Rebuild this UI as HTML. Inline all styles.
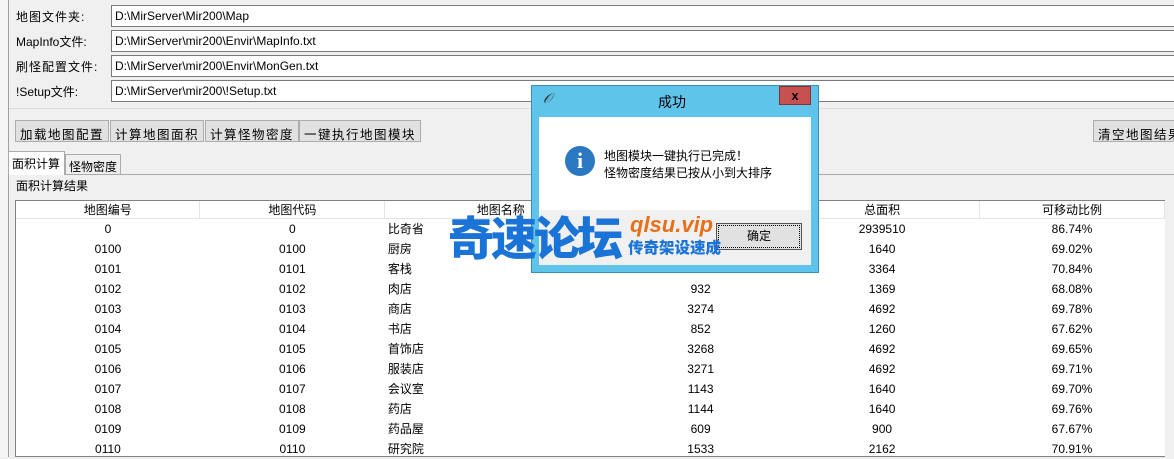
<!DOCTYPE html>
<html><head><meta charset="utf-8"><style>
*{margin:0;padding:0;box-sizing:border-box}
body{width:1174px;height:457px;overflow:hidden;background:#f0f0f0;font-family:"Liberation Sans","Noto Sans CJK SC",sans-serif;font-size:12px;color:#000;position:relative}
.a{position:absolute}
.lbl{left:16px;font-size:12px;letter-spacing:1px}
.inp{left:111px;width:1070px;height:22px;border:1px solid #7a7a7a;background:#fff;padding:3px 3px;font-size:12px}
.btn{top:120px;height:22px;border:1px solid #adadad;background:#e1e1e1;font-size:12.5px;letter-spacing:1.5px;padding:3px 4px;white-space:nowrap}
table{border-collapse:collapse;font-size:12px}
td{height:20px;text-align:center;padding:0}
th{height:16px;font-weight:normal;border-right:1px solid #e5e5e5;border-bottom:1px solid #e5e5e5}
</style></head><body>
<div class="a" style="left:0;top:0;width:9px;height:457px;background:#f5f5f5;border-right:1px solid #a0a0a0"></div>
<div class="a lbl" style="top:8px">地图文件夹:</div>
<div class="a lbl" style="top:33px;letter-spacing:0">MapInfo文件:</div>
<div class="a lbl" style="top:58px">刷怪配置文件:</div>
<div class="a lbl" style="top:83px;letter-spacing:0">!Setup文件:</div>
<div class="a inp" style="top:5px">D:\MirServer\Mir200\Map</div>
<div class="a inp" style="top:30px">D:\MirServer\mir200\Envir\MapInfo.txt</div>
<div class="a inp" style="top:55px">D:\MirServer\mir200\Envir\MonGen.txt</div>
<div class="a inp" style="top:80px">D:\MirServer\mir200\!Setup.txt</div>
<div class="a" style="left:9px;top:108px;width:1165px;border-top:1px solid #ddd"></div>
<div class="a btn" style="left:15px">加载地图配置</div>
<div class="a btn" style="left:110px">计算地图面积</div>
<div class="a btn" style="left:205px">计算怪物密度</div>
<div class="a btn" style="left:299px">一键执行地图模块</div>
<div class="a btn" style="left:1093px">清空地图结果</div>
<div class="a" style="left:9px;top:174px;width:1165px;border-top:1px solid #aaa"></div>
<div class="a" style="left:8px;top:151px;width:57px;height:24px;background:#fff;border:1px solid #aaa;border-bottom:none;padding:3px 3px;font-size:12px;white-space:nowrap">面积计算</div>
<div class="a" style="left:65px;top:154px;width:56px;height:21px;border:1px solid #aaa;border-bottom:none;padding:3px 3px;font-size:12px;white-space:nowrap">怪物密度</div>
<div class="a" style="left:16px;top:177px;font-size:12px;white-space:nowrap">面积计算结果</div>
<div class="a" style="left:15px;top:200px;width:1152px;height:257px;background:#fff;border:1px solid #828282"></div>
<div class="a" style="left:1165px;top:200px;width:9px;height:257px;background:#f0f0f0"></div>
<table class="a" style="left:16px;top:201px;width:1149px">
<colgroup><col style="width:184px"><col style="width:185px"><col style="width:232px"><col style="width:168px"><col style="width:195px"><col style="width:185px"></colgroup>
<tr><th>地图编号</th><th>地图代码</th><th>地图名称</th><th></th><th>总面积</th><th>可移动比例</th></tr>
<tr><td>0</td><td>0</td><td style="text-align:left;padding-left:3px">比奇省</td><td></td><td>2939510</td><td>86.74%</td></tr>
<tr><td>0100</td><td>0100</td><td style="text-align:left;padding-left:3px">厨房</td><td></td><td>1640</td><td>69.02%</td></tr>
<tr><td>0101</td><td>0101</td><td style="text-align:left;padding-left:3px">客栈</td><td></td><td>3364</td><td>70.84%</td></tr>
<tr><td>0102</td><td>0102</td><td style="text-align:left;padding-left:3px">肉店</td><td>932</td><td>1369</td><td>68.08%</td></tr>
<tr><td>0103</td><td>0103</td><td style="text-align:left;padding-left:3px">商店</td><td>3274</td><td>4692</td><td>69.78%</td></tr>
<tr><td>0104</td><td>0104</td><td style="text-align:left;padding-left:3px">书店</td><td>852</td><td>1260</td><td>67.62%</td></tr>
<tr><td>0105</td><td>0105</td><td style="text-align:left;padding-left:3px">首饰店</td><td>3268</td><td>4692</td><td>69.65%</td></tr>
<tr><td>0106</td><td>0106</td><td style="text-align:left;padding-left:3px">服装店</td><td>3271</td><td>4692</td><td>69.71%</td></tr>
<tr><td>0107</td><td>0107</td><td style="text-align:left;padding-left:3px">会议室</td><td>1143</td><td>1640</td><td>69.70%</td></tr>
<tr><td>0108</td><td>0108</td><td style="text-align:left;padding-left:3px">药店</td><td>1144</td><td>1640</td><td>69.76%</td></tr>
<tr><td>0109</td><td>0109</td><td style="text-align:left;padding-left:3px">药品屋</td><td>609</td><td>900</td><td>67.67%</td></tr>
<tr><td>0110</td><td>0110</td><td style="text-align:left;padding-left:3px">研究院</td><td>1533</td><td>2162</td><td>70.91%</td></tr>
</table>
<!-- dialog -->
<div class="a" style="left:531px;top:85px;width:288px;height:188px;background:#5fc4ea;border:1px solid #3a8fb8"></div>
<div class="a" style="left:543px;top:90px;color:#333;font-style:italic;font-size:14px">𝒪</div>
<div class="a" style="left:658px;top:92px;font-size:14px">成功</div>
<div class="a" style="left:779px;top:86px;width:32px;height:19px;background:#c75050;border:1px solid #8a3030;color:#000;text-align:center;font-weight:bold;font-size:13px;line-height:17px">x</div>
<div class="a" style="left:539px;top:117px;width:272px;height:148px;background:#f0f0f0"></div>
<div class="a" style="left:539px;top:117px;width:272px;height:93px;background:#fff"></div>
<div class="a" style="left:565px;top:146px;width:30px;height:30px;border-radius:50%;background:#2b78c2;color:#fff;text-align:center;font:bold 22px/30px 'Liberation Serif',serif">i</div>
<div class="a" style="left:604px;top:148px;font-size:12px;line-height:17px">地图模块一键执行已完成！<br>怪物密度结果已按从小到大排序</div>
<div class="a" style="left:716px;top:223px;width:86px;height:27px;border:1px solid #555;background:#e1e1e1;text-align:center;line-height:24px;font-size:12px;outline:1px dotted #000;outline-offset:-3px">确定</div>
<!-- watermark -->
<div class="a" style="left:448px;top:206px;font:900 46px 'Noto Sans CJK SC',sans-serif;color:#1a73d6;letter-spacing:-3px;line-height:60px">奇速论坛</div>
<div class="a" style="left:630px;top:212px;font:italic 900 22px 'Liberation Sans',sans-serif;color:#e8701a">qlsu.vip</div>
<div class="a" style="left:628px;top:238px;font:900 15.5px 'Noto Sans CJK SC',sans-serif;color:#1a73d6;line-height:19px">传奇架设速成</div>
</body></html>
